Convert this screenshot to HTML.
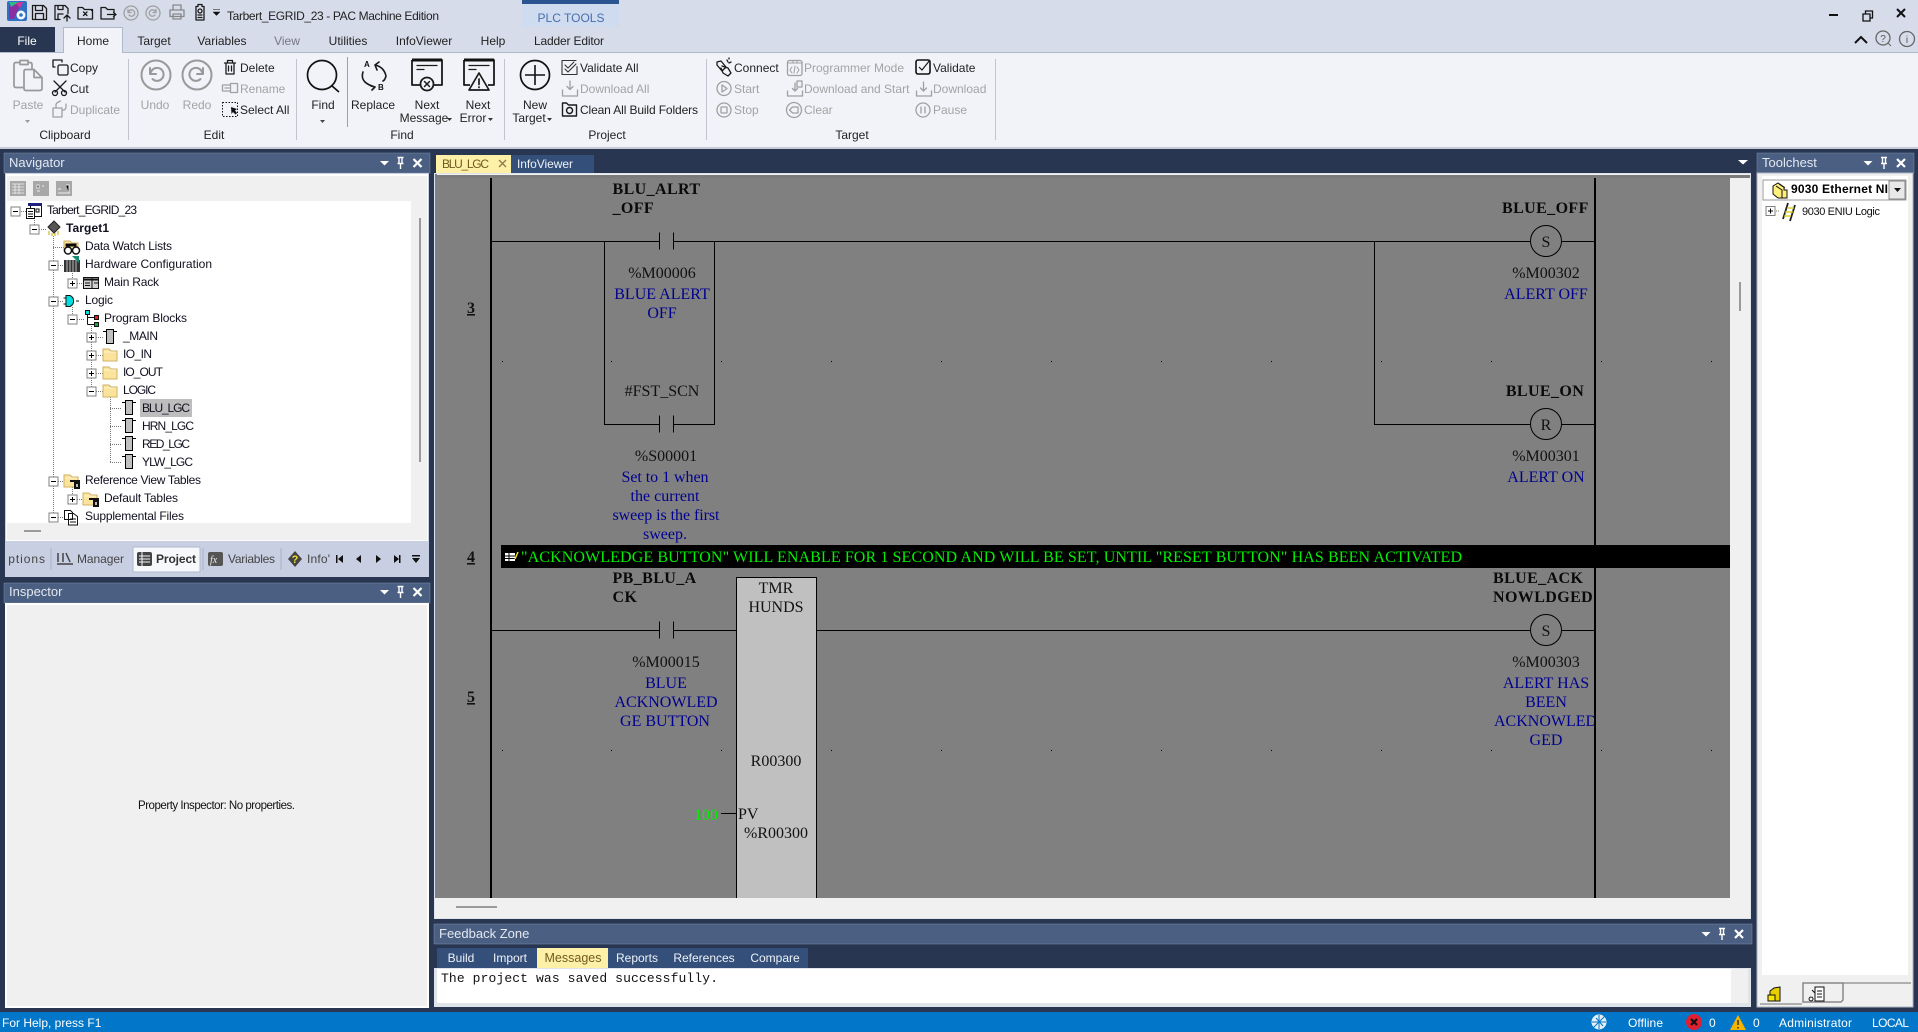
<!DOCTYPE html>
<html><head><meta charset="utf-8"><title>PAC Machine Edition</title>
<style>
html,body{margin:0;padding:0;background:#283651;overflow:hidden}
svg{display:block}
text{font-family:"Liberation Sans",sans-serif;font-size:12px;fill:#222;white-space:pre}
.g{fill:#a3a3a3}
.m{text-anchor:middle}
.w{fill:#eef2f8}
.t{font-size:13px;fill:#e4e9f2}
.tree{fill:#101020;font-size:12px}
.f{font-family:"Liberation Serif",serif;font-size:16px;fill:#111}
.fb{font-family:"Liberation Serif",serif;font-size:16px;font-weight:bold;fill:#0a0a0a;letter-spacing:.4px}
.b{font-family:"Liberation Serif",serif;font-size:16px;fill:#000090}
.bm{font-family:"Liberation Serif",serif;font-size:16px;fill:#000090;text-anchor:middle}
.fm{font-family:"Liberation Serif",serif;font-size:16px;fill:#111;text-anchor:middle}
.n{font-family:"Liberation Serif",serif;font-size:16px;font-weight:bold;fill:#111;text-anchor:middle;text-decoration:underline}
.ic{fill:none;stroke:#1a1a1a;stroke-width:1.300;stroke-linejoin:round;stroke-linecap:round}
.ig{fill:none;stroke:#a0a0a0;stroke-width:1.300;stroke-linejoin:round;stroke-linecap:round}
.l{stroke:#000;stroke-width:1;fill:none}
</style></head><body>
<svg width="1918" height="1032" viewBox="0 0 1918 1032" xmlns="http://www.w3.org/2000/svg">
<defs>
<g id="hdr"><path d="M-4.500-2H4.500L0 2.500Z" fill="#fff"/><path d="M13-5.500h6M14.500-5.500v6h3v-6M13 .5h6M16 .5v5.500" fill="none" stroke="#fff" stroke-width="1.400"/><path d="M29-4l8 8M37-4l-8 8" stroke="#fff" stroke-width="2.200"/></g>
<g id="mn"><rect x="-4.500" y="-4.500" width="9" height="9" fill="#fff" stroke="#808080"/><path d="M-2.500 0h5" stroke="#000"/></g>
<g id="pl"><rect x="-4.500" y="-4.500" width="9" height="9" fill="#fff" stroke="#808080"/><path d="M-2.500 0h5M0-2.500v5" stroke="#000"/></g>
<g id="blk"><path d="M-7-5.500h4M3-5.500h4" stroke="#000" fill="none"/><rect x="-3.500" y="-7.500" width="7" height="14" fill="#c0c0c0" stroke="#000"/></g>
<g id="fld"><path d="M-7-6h6l2 2h6v10h-14z" fill="#fbe39b" stroke="#cfb064"/><path d="M-6-3h12" stroke="#fff6d0"/></g>
<g id="con"><path d="M0-8.500V8.500M14-8.500V8.500" stroke="#000" stroke-width="1"/></g>
</defs>

<!-- top background -->
<rect width="1918" height="52" fill="#d6dce9"/>
<rect y="52" width="1918" height="1" fill="#b0b8cc"/>
<rect y="53" width="1918" height="94" fill="#f1f3f9"/>
<rect y="147" width="1918" height="2" fill="#c8ccd4"/>
<rect y="149" width="1918" height="863" fill="#283651"/>

<!-- logo -->
<rect x="7" y="1" width="20" height="20" rx="2" fill="#2f6fc4"/>
<path d="M9 2h14l-6 10-3 7H9z" fill="#8a2fa0"/><path d="M9 2h10l-8 5z" fill="#2fb88a"/><path d="M16 3l7-1-3 6z" fill="#d8349a"/>
<circle cx="21" cy="15" r="4.500" fill="#f4f8ff"/><circle cx="21" cy="15" r="1.800" fill="#2f6fc4"/>
<!-- QAT icons -->
<g class="ic">
<path d="M32.500 5.500h11l3 3v11h-14zM35.500 5.500v5h7v-5M35.500 19.500v-6h8v6"/>
<path d="M55 5.500h10l3 3v5M55 5.500v14h5M58 5.500v4h5v-4M58 19v-5h5M67 15v6M64 18l3-3 3 3"/>
<path d="M78 7.500h4.500l2 2h7v1M78 7.500v11.500h14.500v-9.500M83.500 12l3.500 3.500M87 12l-3.500 3.500"/>
<path d="M101 7.500h4.500l2 2h6.500v2.500M101 7.500v11.500h13v-2.500M107.500 14.500h8M113.500 12.500l2.500 2-2.500 2"/>
<path d="M196 6.500h2v-2h4v2h2v13.500h-8z"/><circle cx="200" cy="11" r="2"/><path d="M198 15h4M198 17.500h4"/>
</g>
<path class="ig" d="M173 9.500v-4.500h8v4.500M170 10h14v6.500h-14zM173 14h8v5h-8z" style="stroke:#888"/>
<g class="ig"><circle cx="131" cy="13" r="7"/><path d="M128 9.500v3h3M128.500 12a3.200 3.200 0 1 1 .5 3"/><circle cx="153" cy="13" r="7"/><path d="M156 9.500v3h-3M155.500 12a3.200 3.200 0 1 0-.5 3"/></g>
<path d="M213 9.500h7M213 12h7l-3.500 3.500z" fill="#111" stroke="#111" stroke-width=".5"/>
<text x="227" y="20" textLength="212">Tarbert_EGRID_23 - PAC Machine Edition</text>

<!-- PLC tools -->
<rect x="522" width="97" height="27" fill="#cfdcef"/><rect x="522" width="97" height="4" fill="#2a5590"/>
<text x="571" y="22" class="m" style="fill:#4a6db0">PLC TOOLS</text>

<!-- tabs -->
<rect y="27" width="55" height="25" fill="#283651"/>
<text x="27" y="45" class="m" style="fill:#fff">File</text>
<path d="M63.500 53V27.500H122.500V53" fill="#f1f3f9" stroke="#b0b8cc"/>
<rect x="64" y="51" width="58" height="3" fill="#f1f3f9"/>
<text x="93" y="45" class="m">Home</text>
<g style="fill:#333">
<text x="154" y="45" class="m">Target</text>
<text x="222" y="45" class="m">Variables</text>
<text x="287" y="45" class="m" style="fill:#778">View</text>
<text x="348" y="45" class="m">Utilities</text>
<text x="424" y="45" class="m">InfoViewer</text>
<text x="493" y="45" class="m">Help</text>
<text x="569" y="45" class="m" textLength="70">Ladder Editor</text>
</g>

<!-- window controls -->
<path d="M1829 15h9" stroke="#111" stroke-width="2"/>
<path d="M1863 14h7v7h-7zM1865.500 14v-3h7v7h-2.500" fill="none" stroke="#111" stroke-width="1.300"/>
<path d="M1897 9l8 8M1905 9l-8 8" stroke="#111" stroke-width="2"/>
<path d="M1855 43l6-6 6 6" fill="none" stroke="#111" stroke-width="2"/>
<circle cx="1883" cy="38" r="7" class="ig" style="stroke:#666"/><path d="M1888 43l3 3" stroke="#666"/>
<text x="1883" y="42" class="m" style="font-size:10px;fill:#555">?</text>
<circle cx="1907" cy="39" r="7.500" class="ig" style="stroke:#666"/><text x="1907" y="43" class="m" style="font-size:10px;fill:#555">i</text>

<!-- ribbon separators -->
<g stroke="#c0c4cc"><path d="M128.500 59V140M296.500 59V140M504.500 59V140M706.500 59V140M995.500 59V140"/></g>
<path d="M347.500 57V127" stroke="#9aa0aa"/>

<!-- clipboard -->
<g class="ig" style="stroke:#999;stroke-width:1.700">
<path d="M20 62.500h-4q-2 0-2 2v21q0 2 2 2h8M28 62.500h2q2 0 2 2v5M20 60.500h8v4h-8z"/>
<path d="M26 69.500h8l8 8v11q0 2-2 2H26q-2 0-2-2V71.500q0-2 2-2zM34 69.500v8h8"/>
</g>
<g class="ic"><path d="M55 67h-2v-7h9v2"/><rect x="58" y="65" width="10" height="10" rx="1.500"/>
<path d="M54 81l11 11M66 81L55 92"/><circle cx="55" cy="93" r="2.500"/><circle cx="64" cy="93" r="2.500"/></g>
<path class="ig" d="M53 108h9v9h-9zM56 108v-3q0-1.500 1.500-2.500l3-1.500M62 110h2q2-1 2-3v-3"/>
<text x="28" y="109" class="m g">Paste</text><path d="M25 120h5l-2.500 3z" fill="#999"/>
<text x="70" y="72">Copy</text><text x="70" y="93">Cut</text><text x="70" y="114" class="g">Duplicate</text>
<text x="65" y="139" class="m">Clipboard</text>

<!-- edit -->
<g fill="none" stroke="#999" stroke-width="2" stroke-linecap="round" stroke-linejoin="round"><circle cx="156" cy="75" r="14.500"/><path d="M150 68v6h6M151 72a6.500 6.500 0 1 1 1.500 7"/><circle cx="197" cy="75" r="14.500"/><path d="M203 68v6h-6M202 72a6.500 6.500 0 1 0-1.500 7"/></g>
<text x="155" y="109" class="m g">Undo</text><text x="197" y="109" class="m g">Redo</text>
<path class="ic" d="M224.500 63h11M227.500 63v-2.500h5V63M226 63v11h8V63M228.500 66v5M231.500 66v5"/>
<path class="ig" d="M222.500 85h8v6h-8zM230.500 83.500h7v9h-7zM230.500 83.500l2 0M230.500 92.500h2M225 88h4"/>
<path d="M222.500 102.500h15v14h-15z" fill="none" stroke="#111" stroke-dasharray="1.500 1.500"/><path d="M231 107l6 2-2 1.500 2 2.500-1.500 1.500-2.500-2.500-1.500 2z" fill="#111"/>
<text x="240" y="72">Delete</text><text x="240" y="93" class="g">Rename</text><text x="240" y="114">Select All</text>
<text x="214" y="139" class="m">Edit</text>

<!-- find -->
<circle cx="322" cy="75" r="14.500" fill="none" stroke="#111" stroke-width="1.700"/><path d="M332 86l7 6" stroke="#111" stroke-width="1.700"/>
<text x="323" y="109" class="m">Find</text><path d="M320 120h5l-2.500 3z" fill="#444"/>
<text x="364" y="67" style="font-size:8px;font-weight:bold;fill:#111">A</text><text x="378" y="90" style="font-size:8px;font-weight:bold;fill:#111">B</text>
<path class="ic" d="M375 65q9 2 11 11-1 4-3 5M375 65l4-3M375 65l2 5M363 72q-2 6 2 10 3 3 10 5M375 87l-4-1M375 87l-3 3" style="stroke-width:1.600"/>
<text x="373" y="109" class="m">Replace</text>
<path class="ic" d="M412 60v25h8M434 85h8V60H412" style="stroke-width:1.800;stroke-linecap:butt"/><path d="M412 60h30" stroke="#111" stroke-width="3"/>
<path class="ic" d="M417 65.500h20M417 69.500h7"/>
<circle class="ic" cx="427" cy="84" r="6.500" style="stroke-width:1.800"/><path class="ic" d="M424.500 81.500l5 5M429.500 81.500l-5 5" style="stroke-width:1.500"/>
<text x="427" y="109" class="m">Next</text><text x="424" y="122" class="m">Message</text><path d="M447 118h5l-2.500 3z" fill="#333"/>
<path class="ic" d="M464 60v25h6M488 85h6V60H464" style="stroke-width:1.800;stroke-linecap:butt"/><path d="M464 60h30" stroke="#111" stroke-width="3"/>
<path class="ic" d="M469 65.500h20M469 69.500h7"/>
<path class="ic" d="M479 73l10 17h-20zM479 79v5.500M479 87v.5" style="stroke-width:1.700"/>
<text x="478" y="109" class="m">Next</text><text x="473" y="122" class="m">Error</text><path d="M488 118h5l-2.500 3z" fill="#333"/>
<text x="402" y="139" class="m">Find</text>

<!-- project -->
<circle cx="535" cy="75" r="14.500" fill="none" stroke="#111" stroke-width="1.700"/><path d="M535 65v20M525 75h20" stroke="#111" stroke-width="1.600"/>
<text x="535" y="109" class="m">New</text><text x="529" y="122" class="m">Target</text><path d="M547 118h5l-2.500 3z" fill="#333"/>
<path class="ic" d="M576 60.500h-14v14h15v-8M565 65l3 3 6-6M565 69l3 3 8-8" style="stroke:#333;stroke-width:1.100"/>
<path class="ig" d="M570 81v8M567 86.500l3 3 3-3M562.500 90v6h15v-6"/>
<path class="ic" d="M562.500 103v13h14v-11h-8l-2-2zM569.500 107.500a3 3 0 1 0 .1 0" style="stroke-width:1.400"/>
<text x="580" y="72">Validate All</text><text x="580" y="93" class="g">Download All</text><text x="580" y="114" textLength="118">Clean All Build Folders</text>
<text x="607" y="139" class="m">Project</text>

<!-- target -->
<path class="ic" d="M717 62l4-1 5 6-4 4-5-6zM722 66l6 2 3 5-3 3-5-3-2-5M727 60l1 2M731 62l-2 1M729 58v1"/>
<circle class="ig" cx="724" cy="88.500" r="7"/><path class="ig" d="M722 85l5 3.500-5 3.500z"/>
<circle class="ig" cx="724" cy="110" r="7"/><rect class="ig" x="721" y="107" width="6" height="6" rx=".5"/>
<text x="734" y="72">Connect</text><text x="734" y="93" class="g">Start</text><text x="734" y="114" class="g">Stop</text>
<rect class="ig" x="787.500" y="60.500" width="14.500" height="15" rx="2"/><path class="ig" d="M787.500 63h14.500M793 61v2M797 61v2M792 67l-2 3 2 3M797 67l2 3-2 3M795 66l-1 7" style="stroke-width:1"/>
<path class="ig" d="M787.500 91v5h15v-5M795 83v8M792.500 88.500l2.500 2.500 2.500-2.500M797 81h5v6h-5z"/>
<circle class="ig" cx="794" cy="110" r="7.500"/><path class="ig" d="M789.500 110l3-3h5.500v6h-5.500z"/>
<text x="804" y="72" class="g">Programmer Mode</text><text x="804" y="93" class="g">Download and Start</text><text x="804" y="114" class="g">Clear</text>
<rect x="916" y="60" width="14" height="14" rx="2" fill="none" stroke="#111" stroke-width="1.600"/><path d="M919 67l3 3 8-10" fill="none" stroke="#111" stroke-width="1.100"/>
<path class="ig" d="M916.500 91v5h15v-5M923.500 82v9M920.500 88l3 3 3-3"/>
<circle class="ig" cx="923" cy="110" r="7"/><path class="ig" d="M921 107v6M925 107v6"/>
<text x="933" y="72">Validate</text><text x="933" y="93" class="g">Download</text><text x="933" y="114" class="g">Pause</text>
<text x="852" y="139" class="m">Target</text>

<!-- NAVIGATOR -->
<rect x="4" y="153" width="426" height="20" fill="#4a5f82" stroke="#7a8aa6" stroke-width=".5"/>
<text x="9" y="167" class="t">Navigator</text>
<use href="#hdr" x="384.500" y="163"/>
<rect x="5" y="173" width="424" height="404" fill="#c8cfe2"/>
<rect x="6" y="174" width="422" height="367" fill="#fff"/>
<rect x="7" y="176" width="420" height="364" fill="#f0f0f0"/>
<rect x="7" y="201" width="404" height="322" fill="#fff"/>
<rect x="419" y="218" width="2" height="244" fill="#9a9a9a"/>
<rect x="24" y="530" width="17" height="2" fill="#9a9a9a"/>
<rect x="10" y="181" width="16" height="15" fill="#a8a8a8"/><path d="M12 184h12M12 187h12M12 190h12M12 193h12M15 184v10M19 184v10" stroke="#eee" stroke-width=".8"/>
<rect x="33" y="181" width="16" height="15" fill="#a8a8a8"/><path d="M37 185h2v3h-2zM42 186h2M37 191h3" stroke="#eee"/>
<rect x="56" y="181" width="16" height="15" fill="#a8a8a8"/><path d="M58 193h12M66 185h3v8M58 189h3" stroke="#eee"/>

<!-- tree lines -->
<g stroke="#777" stroke-dasharray="1 1" fill="none">
<path d="M34.500 216V225M53.500 236V513M72.500 271V279M72.500 307V315M72.500 487V495M91.500 326V387M110.500 397V462"/>
<path d="M21 211.500H27M39 229.500H46M53 247.500H64M58 265.500H64M77 283.500H84M58 301.500H64M77 319.500H85M96 337.500H103M96 355.500H103M96 373.500H103M96 391.500H103M110 408.500H121M110 426.500H121M110 444.500H121M110 462.500H121M58 481.500H64M77 499.500H84M58 517.500H64"/>
</g>
<use href="#mn" x="15.500" y="211.500"/><use href="#mn" x="34.500" y="229.500"/><use href="#mn" x="53.500" y="265.500"/><use href="#pl" x="72.500" y="283.500"/><use href="#mn" x="53.500" y="301.500"/><use href="#mn" x="72.500" y="319.500"/><use href="#pl" x="91.500" y="337.500"/><use href="#pl" x="91.500" y="355.500"/><use href="#pl" x="91.500" y="373.500"/><use href="#mn" x="91.500" y="391.500"/><use href="#mn" x="53.500" y="481.500"/><use href="#pl" x="72.500" y="499.500"/><use href="#mn" x="53.500" y="517.500"/>

<!-- tree icons -->
<rect x="30.500" y="204.500" width="11" height="12" fill="#fff" stroke="#111"/><rect x="28" y="203" width="14" height="3" fill="#202080"/><path d="M36 209h3v3h-3z" stroke="#111" fill="none"/><rect x="26.500" y="208.500" width="8" height="10" fill="#fff" stroke="#111"/><path d="M28 211.500h5M28 214h5M28 216.500h5" stroke="#111"/>
<path d="M54 221l6 6-6 6-6-6z" fill="#555" stroke="#222"/><path d="M49 231v4M52 233v3M55 233v3M58 231v4" stroke="#c8a800"/>
<path d="M64 241h6l2 2h6v8H64z" fill="#fbe39b" stroke="#cfb064"/><circle cx="68" cy="250.500" r="3.500" fill="#fff" stroke="#111" stroke-width="1.500"/><circle cx="76" cy="250.500" r="3.500" fill="#fff" stroke="#111" stroke-width="1.500"/><path d="M66 244h10v2H66zM71.500 249.500h1" stroke="#111"/>
<rect x="64" y="260" width="16" height="12" fill="#333"/><path d="M67 260v12M70 260v12M73 260v12M76 260v12" stroke="#bbb"/><path d="M72 256h7v7z" fill="#1a8a70"/>
<rect x="83.500" y="277.500" width="15" height="11" fill="#d0d0d0" stroke="#111"/><path d="M84 279.500h14" stroke="#111" stroke-width="2"/><path d="M92 277v11M85 283h5M94 283h4M85 285.500h5" stroke="#111"/>
<path d="M66 295.500h4a6 6 0 0 1 0 11h-4z" fill="#00e0e0" stroke="#111"/><path d="M66 298h-2.500M66 304h-2.500M76 301h3" stroke="#111"/>
<rect x="85.500" y="310.500" width="4" height="4" fill="#00e0e0" stroke="#111"/><path d="M87.500 314v10.500M87.500 317.500h7M87.500 324.500h7" stroke="#111" fill="none"/><rect x="94.500" y="315.500" width="4" height="4" fill="#e02020" stroke="#111"/><rect x="94.500" y="322.500" width="4" height="4" fill="#20a040" stroke="#111"/>
<use href="#blk" x="110" y="337"/><use href="#fld" x="110" y="355"/><use href="#fld" x="110" y="373"/><use href="#fld" x="110" y="391"/>
<rect x="140" y="399" width="52" height="18" fill="#bdbdbd"/>
<use href="#blk" x="129" y="408"/><use href="#blk" x="129" y="426"/><use href="#blk" x="129" y="444"/><use href="#blk" x="129" y="462"/>
<use href="#fld" x="71" y="481"/><path d="M70 480h10v2h-10zM74 482h6v7h-6z" fill="#111"/><rect x="76" y="484" width="2" height="3" fill="#bbb"/>
<use href="#fld" x="90" y="499"/><path d="M89 498h10v2h-10zM93 500h6v7h-6z" fill="#111"/><rect x="95" y="502" width="2" height="3" fill="#bbb"/>
<path d="M64.500 510.500h6l2 2v7h-8zM68.500 513.500h5l4 3v8.500h-9z" fill="#fff" stroke="#111"/><path d="M70 519h6M70 522h6" stroke="#111"/>

<!-- tree text -->
<text class="tree" x="47" y="214" textLength="90">Tarbert_EGRID_23</text>
<text class="tree" x="66" y="232" textLength="43" style="font-weight:bold">Target1</text>
<text class="tree" x="85" y="250" textLength="87">Data Watch Lists</text>
<text class="tree" x="85" y="268" textLength="127">Hardware Configuration</text>
<text class="tree" x="104" y="286" textLength="55">Main Rack</text>
<text class="tree" x="85" y="304" textLength="28">Logic</text>
<text class="tree" x="104" y="322" textLength="83">Program Blocks</text>
<text class="tree" x="123" y="340" textLength="35">_MAIN</text>
<text class="tree" x="123" y="358" textLength="29">IO_IN</text>
<text class="tree" x="123" y="376" textLength="40">IO_OUT</text>
<text class="tree" x="123" y="394" textLength="33">LOGIC</text>
<text class="tree" x="142" y="412" textLength="48">BLU_LGC</text>
<text class="tree" x="142" y="430" textLength="52">HRN_LGC</text>
<text class="tree" x="142" y="448" textLength="48">RED_LGC</text>
<text class="tree" x="142" y="466" textLength="51">YLW_LGC</text>
<text class="tree" x="85" y="484" textLength="116">Reference View Tables</text>
<text class="tree" x="104" y="502" textLength="74">Default Tables</text>
<text class="tree" x="85" y="520" textLength="99">Supplemental Files</text>

<!-- nav bottom tabs -->
<rect x="6" y="541" width="422" height="34" fill="#c8cfe2"/>
<path d="M133 571V548q0-1 1-1h65q1 0 1 1v23q0 1-1 1h-65q-1 0-1-1z" fill="#f7f8fb" stroke="#b0b8cc"/>
<g stroke="#aab2c6"><path d="M51 548v22M281 548v22M203 548v22"/></g>
<svg x="8" y="545" width="40" height="24" viewBox="8 545 40 24"><text x="-2" y="563" textLength="47" style="fill:#444">Options</text></svg>
<path d="M58 553v9M63 553v9M66 553l4 9M57 564h16" stroke="#444" stroke-width="1.500" fill="none"/>
<text x="77" y="563" textLength="47" style="fill:#444">Manager</text>
<rect x="137" y="552" width="15" height="14" rx="2" fill="#444"/><path d="M139 556h11M139 559h11M139 562h11M142 552v14" stroke="#f7f8fb"/>
<text x="156" y="563" textLength="40" style="font-weight:bold;fill:#333">Project</text>
<rect x="208" y="552" width="15" height="14" rx="2" fill="#555"/><text x="210" y="563" style="fill:#eee;font:italic 10px 'Liberation Serif',serif">fx</text>
<text x="228" y="563" textLength="47" style="fill:#444">Variables</text>
<path d="M295 551l7 8-7 8-7-8z" fill="#444"/><text x="295" y="563" class="m" style="font-size:11px;font-weight:bold;fill:#f0e030">?</text>
<text x="307" y="563" textLength="23" style="fill:#444">Info'</text>
<g fill="#111"><path d="M336 555h1.500v8H336zM343 555v8l-5-4z"/><path d="M361 555v8l-5-4z"/><path d="M376 555v8l5-4z"/><path d="M394 555v8l5-4zM399 555h1.500v8H399z"/><path d="M412 555h8v1.500h-8zM412 558h8l-4 5z"/></g>

<!-- INSPECTOR -->
<rect x="4" y="583" width="426" height="20" fill="#4a5f82" stroke="#7a8aa6" stroke-width=".5"/>
<text x="9" y="596" class="t">Inspector</text>
<use href="#hdr" x="384.500" y="592"/>
<rect x="5" y="603" width="424" height="405" fill="#fff"/>
<rect x="7" y="605" width="420" height="401" fill="#f0f0f0"/>
<text x="216.500" y="809" class="m" textLength="157" style="font-size:11.500px;fill:#111">Property Inspector: No properties.</text>

<!-- EDITOR TABS -->
<rect x="436" y="155" width="75" height="18" fill="#fff0a8"/>
<text x="442" y="168" textLength="47" style="fill:#705a20">BLU_LGC</text>
<path d="M499 160l7 7M506 160l-7 7" stroke="#8a7a50" stroke-width="1.300"/>
<rect x="511" y="155" width="83" height="18" fill="#34507a"/>
<text x="517" y="168" textLength="56" class="w">InfoViewer</text>
<path d="M1738 160h10l-5 4.500z" fill="#fff"/>

<!-- EDITOR FRAME -->
<rect x="434" y="173" width="1317" height="746" fill="#dfe3ea"/>
<rect x="435" y="174" width="1315" height="744" fill="#f0f0f0"/>
<rect x="435" y="174" width="2" height="724" fill="#7b8190"/>
<rect x="435" y="175" width="1315" height="3" fill="#7b7b7b"/>
<rect x="437" y="178" width="1293" height="720" fill="#808080"/>
<rect x="1739" y="282" width="2" height="29" fill="#9a9a9a"/>
<rect x="456" y="906" width="41" height="2" fill="#9a9a9a"/>

<svg x="437" y="178" width="1293" height="720" viewBox="437 178 1293 720">
<!-- dots -->
<g fill="#000"><rect x="502" y="361" width="1" height="1"/><rect x="611" y="361" width="1" height="1"/><rect x="721" y="361" width="1" height="1"/><rect x="831" y="361" width="1" height="1"/><rect x="941" y="361" width="1" height="1"/><rect x="1051" y="361" width="1" height="1"/><rect x="1161" y="361" width="1" height="1"/><rect x="1271" y="361" width="1" height="1"/><rect x="1381" y="361" width="1" height="1"/><rect x="1491" y="361" width="1" height="1"/><rect x="1601" y="361" width="1" height="1"/><rect x="1711" y="361" width="1" height="1"/>
<rect x="502" y="750" width="1" height="1"/><rect x="611" y="750" width="1" height="1"/><rect x="721" y="750" width="1" height="1"/><rect x="831" y="750" width="1" height="1"/><rect x="941" y="750" width="1" height="1"/><rect x="1051" y="750" width="1" height="1"/><rect x="1161" y="750" width="1" height="1"/><rect x="1271" y="750" width="1" height="1"/><rect x="1381" y="750" width="1" height="1"/><rect x="1491" y="750" width="1" height="1"/><rect x="1601" y="750" width="1" height="1"/><rect x="1711" y="750" width="1" height="1"/></g>

<!-- rung 3 -->
<path class="l" d="M491 241.500H659.500M673.500 241.500H1531M1561 241.500H1595M604.500 241.500V424.500H659.500M673.500 424.500H714.500V241.500M1374.500 241.500V424.500H1531M1561 424.500H1595"/>
<use href="#con" x="659.500" y="241"/><use href="#con" x="659.500" y="424"/>
<circle class="l" cx="1546" cy="241" r="15.500"/><circle class="l" cx="1546" cy="424" r="15.500"/>
<text x="1546" y="247" class="fm">S</text><text x="1546" y="430" class="fm">R</text>
<text x="612.500" y="194" class="fb">BLU_ALRT</text><text x="612.500" y="213" class="fb">_OFF</text>
<text x="662" y="278" class="fm">%M00006</text>
<text x="662" y="299" class="bm">BLUE ALERT</text><text x="662" y="318" class="bm">OFF</text>
<text x="662" y="396" class="fm">#FST_SCN</text>
<text x="666" y="461" class="fm">%S00001</text>
<text x="665" y="482" class="bm" textLength="87">Set to 1 when</text>
<text x="665" y="501" class="bm" textLength="69">the current</text>
<text x="666" y="520" class="bm" textLength="107">sweep is the first</text>
<text x="665" y="539" class="bm" textLength="44">sweep.</text>
<text x="1502" y="213" class="fb">BLUE_OFF</text>
<text x="1546" y="278" class="fm">%M00302</text><text x="1546" y="299" class="bm">ALERT OFF</text>
<text x="1545" y="396" class="fb" style="text-anchor:middle">BLUE_ON</text>
<text x="1546" y="461" class="fm">%M00301</text><text x="1546" y="482" class="bm">ALERT ON</text>
<text x="471" y="313" class="n">3</text>

<!-- comment -->
<rect x="501" y="545" width="1229" height="23" fill="#000"/>
<rect x="505" y="553" width="10" height="8" fill="#fff"/><path d="M505 556h10M505 558.500h10M509 553v8" stroke="#000"/><path d="M515 559l3-7" stroke="#f0e020" stroke-width="1.500"/>
<text x="521" y="562" textLength="941" style="font-family:'Liberation Serif',serif;font-size:16px;fill:#00f000">"ACKNOWLEDGE BUTTON" WILL ENABLE FOR 1 SECOND AND WILL BE SET, UNTIL "RESET BUTTON" HAS BEEN ACTIVATED</text>
<text x="471" y="562" class="n">4</text>

<!-- rung 5 -->
<rect x="736.500" y="577.500" width="80" height="330" fill="#c0c0c0" stroke="#000"/>
<path class="l" d="M491 630.500H659.500M673.500 630.500H736M817 630.500H1531M1561 630.500H1595M721 813.500H736"/>
<use href="#con" x="659.500" y="630"/>
<circle class="l" cx="1546" cy="630" r="15.500"/><text x="1546" y="636" class="fm">S</text>
<text x="612.500" y="583" class="fb">PB_BLU_A</text><text x="612.500" y="602" class="fb">CK</text>
<text x="776" y="593" class="fm">TMR</text><text x="776" y="612" class="fm">HUNDS</text>
<text x="666" y="667" class="fm">%M00015</text>
<text x="666" y="688" class="bm">BLUE</text><text x="666" y="707" class="bm">ACKNOWLED</text><text x="665" y="726" class="bm">GE BUTTON</text>
<text x="776" y="766" class="fm">R00300</text>
<text x="738" y="819" class="f">PV</text>
<text x="776" y="838" class="fm">%R00300</text>
<text x="694" y="820" style="font-family:'Liberation Serif',serif;font-size:16px;fill:#00f000">100</text>
<text x="1493" y="583" class="fb">BLUE_ACK</text><text x="1493" y="602" class="fb">NOWLDGED</text>
<text x="1546" y="667" class="fm">%M00303</text>
<text x="1546" y="688" class="bm">ALERT HAS</text><text x="1546" y="707" class="bm">BEEN</text><text x="1494" y="726" class="b">ACKNOWLED</text><text x="1546" y="745" class="bm">GED</text>
<text x="471" y="702" class="n">5</text>

<!-- rails and clip of overflowing labels -->
<rect x="1596" y="570" width="20" height="170" fill="#808080"/>
<rect x="490" y="178" width="2" height="720" fill="#000"/>
<rect x="1594" y="178" width="2" height="720" fill="#000"/>
<rect x="1596" y="545" width="134" height="23" fill="#000"/>
<rect x="1601" y="750" width="1" height="1" fill="#000"/>
</svg>

<!-- FEEDBACK -->
<rect x="434" y="924" width="1318" height="20" fill="#4a5f82" stroke="#7a8aa6" stroke-width=".5"/>
<text x="439" y="938" class="t">Feedback Zone</text>
<use href="#hdr" x="1706" y="934"/>
<rect x="437" y="948" width="371" height="20" fill="#34507a"/>
<rect x="537" y="948" width="71" height="20" fill="#fff0a8"/>
<text x="461" y="962" class="m w">Build</text><text x="510" y="962" class="m w">Import</text>
<text x="573" y="962" class="m" style="fill:#705a20;font-size:12.500px">Messages</text>
<text x="637" y="962" class="m w">Reports</text><text x="704" y="962" class="m w">References</text><text x="775" y="962" class="m w">Compare</text>
<rect x="434" y="968" width="1317" height="39" fill="#dfe3ea"/>
<rect x="437" y="969" width="1294" height="34" fill="#fff"/>
<rect x="1731" y="969" width="17" height="34" fill="#f0f0f0"/>
<text x="441" y="982" textLength="277" style="font-family:'Liberation Mono',monospace;font-size:13px;fill:#111">The project was saved successfully.</text>

<!-- TOOLCHEST -->
<rect x="1757" y="153" width="157" height="20" fill="#4a5f82" stroke="#7a8aa6" stroke-width=".5"/>
<text x="1762" y="167" class="t">Toolchest</text>
<use href="#hdr" x="1868" y="163"/>
<rect x="1757" y="173" width="156" height="834" fill="#f0f0f0" stroke="#b0b6c4"/>
<rect x="1762" y="176" width="146" height="799" fill="#fff"/>
<rect x="1763" y="180" width="143" height="20" fill="#fff" stroke="#999"/>
<rect x="1889" y="181" width="16" height="18" fill="#e8e8e8" stroke="#888"/><path d="M1894 188h7l-3.500 4z" fill="#111"/>
<path d="M1773 186l5-3 6 4 0 3 3 0 0 8-9 0-5-4z" fill="#fff07a" stroke="#111"/><path d="M1776 186l6 4v8M1779 184l6 4" stroke="#111" fill="none"/>
<text x="1791" y="193" textLength="97" style="font-weight:bold;font-size:12px;fill:#000">9030 Ethernet NI</text>
<use href="#pl" x="1770.500" y="211"/><path d="M1776 211h4" stroke="#777" stroke-dasharray="1 1"/>
<path d="M1783 219l5-16M1790 221l5-16" stroke="#222" stroke-width="1.800" fill="none"/><path d="M1784 216h7M1785 212h8M1787 208h7" stroke="#d8c800" stroke-width="1.300" fill="none"/>
<text x="1802" y="215" textLength="78" style="font-size:11px;fill:#111">9030 ENIU Logic</text>
<path d="M1843 983h68M1760 1004h42" stroke="#999" stroke-width="1.500" fill="none"/>
<path d="M1803 1002V983h40v17l-2 2z" fill="#f0f0f0" stroke="#888" stroke-width="1.500"/>
<path d="M1770 991l4-3 6-1v14h-10z" fill="#e8d000" stroke="#111"/><path d="M1768 995h7v6h-7z" fill="#f8e800" stroke="#111"/>
<path d="M1815 987h9v14h-9zM1812 990l3 3M1811 997a2 2 0 1 0 .1 0M1817 991h5M1817 994h5M1817 997h5" fill="#fff" stroke="#111"/>

<!-- STATUS BAR -->
<rect y="1012" width="1918" height="20" fill="#0277c9"/>
<text x="2" y="1027" class="w" style="fill:#fff">For Help, press F1</text>
<circle cx="1599" cy="1022" r="7.500" fill="#e8eef6"/><path d="M1593 1028l12-12M1596 1018l7 8M1592 1022h14M1599 1015v14" stroke="#0277c9"/>
<text x="1628" y="1027" textLength="35" style="fill:#fff">Offline</text>
<circle cx="1694" cy="1022" r="8" fill="#e02030"/><path d="M1691 1019l6 6M1697 1019l-6 6" stroke="#111" stroke-width="2.200"/>
<text x="1709" y="1027" style="fill:#fff">0</text>
<path d="M1738 1015l8 15h-16z" fill="#f5b400"/><path d="M1738 1020v5M1738 1027v1.500" stroke="#222" stroke-width="1.300"/>
<text x="1753" y="1027" style="fill:#fff">0</text>
<text x="1779" y="1027" textLength="73" style="fill:#fff">Administrator</text>
<text x="1872" y="1027" textLength="37" style="fill:#fff">LOCAL</text>
</svg>
</body></html>
